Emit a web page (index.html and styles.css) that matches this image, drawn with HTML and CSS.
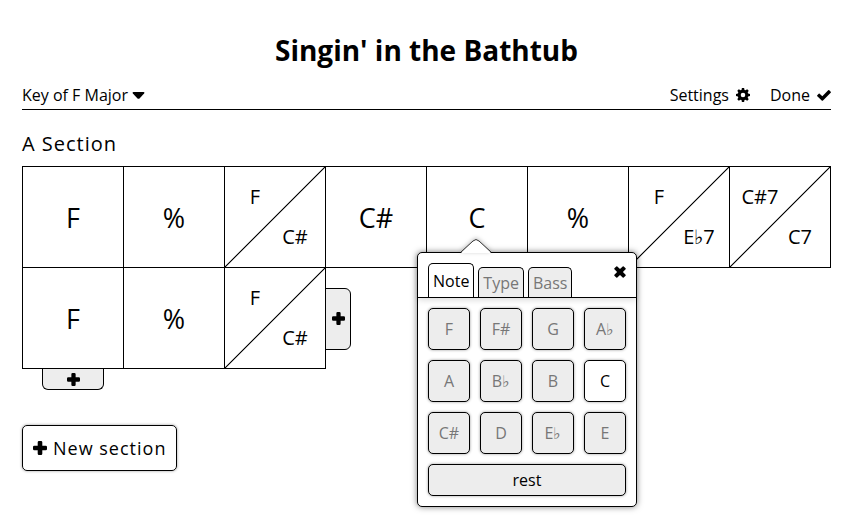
FILE: index.html
```html
<!DOCTYPE html>
<html lang="en">
<head>
<meta charset="utf-8">
<meta name="viewport" content="width=device-width, initial-scale=1">
<title>Singin' in the Bathtub</title>
<link rel="stylesheet" href="styles.css">
</head>
<body>
<svg class="sprite" aria-hidden="true">
  <symbol id="plus" viewBox="0 0 14 14"><path d="M6 0h2q1.300 0 1.300 1.300v3.400h3.400q1.300 0 1.300 1.300v2q0 1.300-1.300 1.300H9.300v3.400Q9.300 14 8 14H6q-1.300 0-1.300-1.300V9.300H1.300Q0 9.300 0 8V6q0-1.300 1.300-1.300h3.400V1.300Q4.700 0 6 0z"/></symbol>
</svg>
<main class="page">
  <h1 class="title">Singin' in the Bathtub</h1>
  <nav class="toolbar">
    <button class="tool" type="button">Key of F Major
      <svg class="caret" viewBox="0 0 12 7" aria-hidden="true"><path d="M1 0h10q1.500.3.600 1.500L7 6.400q-1 .9-2 0L.4 1.500Q-.5.300 1 0z"/></svg>
    </button>
    <div class="tools">
      <button class="tool" type="button">Settings
        <svg class="gear" viewBox="0 0 14 14" aria-hidden="true"><path fill-rule="evenodd" d="M5.900 0h2.200l.4 1.900 1 .4L11.200 1.300l1.500 1.500-1 1.700.4 1 1.900.4v2.200l-1.900.4-.4 1 1 1.700-1.500 1.500-1.700-1-1 .4-.4 1.900H5.900l-.4-1.900-1-.4-1.700 1-1.500-1.500 1-1.700-.4-1L0 8.100V5.900l1.900-.4.4-1-1-1.700 1.500-1.500 1.700 1 1-.4zM7 4.700a2.300 2.300 0 1 0 0 4.600 2.300 2.300 0 0 0 0-4.600z"/></svg>
      </button>
      <button class="tool" type="button">Done
        <svg class="check" viewBox="0 0 14 11" aria-hidden="true"><path d="M11.200.3q.6-.5 1.100 0l1.400 1.400q.5.500 0 1L6 10.500q-.7.600-1.300 0L.3 6.200q-.5-.5 0-1l1.400-1.400q.5-.5 1 0l2.600 2.500z"/></svg>
      </button>
    </div>
  </nav>

  <section>
    <h2 class="section-title">A Section</h2>
    <div class="bars">
      <div class="bar"><button class="chord" type="button">F</button></div>
      <div class="bar"><button class="chord" type="button">%</button></div>
      <div class="bar"><button class="chord split" type="button"><span>F</span><span class="second">C#</span></button></div>
      <div class="bar"><button class="chord" type="button">C#</button></div>
      <div class="bar">
        <button class="chord" type="button">C</button>
        <div class="popup" role="dialog" aria-label="Edit chord">
          <svg class="arrow" viewBox="0 0 32 15" aria-hidden="true"><path class="arrow-fill" d="M1 15 13 3q3-3 6 0l12 12z"/><path class="arrow-line" d="M1 14 13 3q3-3 6 0l12 11"/></svg>
          <div class="popup-head">
            <div class="tabs" role="tablist">
              <button class="tab active" type="button" role="tab" aria-selected="true">Note</button>
              <button class="tab" type="button" role="tab" aria-selected="false">Type</button>
              <button class="tab" type="button" role="tab" aria-selected="false">Bass</button>
            </div>
            <button class="close" type="button" aria-label="Close"><svg viewBox="0 0 12 12" aria-hidden="true"><path d="M3.300.4 6 3.100 8.700.4q.5-.4 1 0l1.900 1.900q.4.500 0 1L8.900 6l2.700 2.700q.4.500 0 1l-1.900 1.900q-.5.400-1 0L6 8.900l-2.700 2.700q-.5.400-1 0L.4 9.700q-.4-.5 0-1L3.100 6 .4 3.300q-.4-.5 0-1L2.300.4q.5-.4 1 0z"/></svg></button>
          </div>
          <div class="keys">
            <button class="key" type="button">F</button>
            <button class="key" type="button">F#</button>
            <button class="key" type="button">G</button>
            <button class="key" type="button">A♭</button>
            <button class="key" type="button">A</button>
            <button class="key" type="button">B♭</button>
            <button class="key" type="button">B</button>
            <button class="key selected" type="button">C</button>
            <button class="key" type="button">C#</button>
            <button class="key" type="button">D</button>
            <button class="key" type="button">E♭</button>
            <button class="key" type="button">E</button>
            <button class="key rest" type="button">rest</button>
          </div>
        </div>
      </div>
      <div class="bar"><button class="chord" type="button">%</button></div>
      <div class="bar"><button class="chord split" type="button"><span>F</span><span class="second">E♭7</span></button></div>
      <div class="bar"><button class="chord split" type="button"><span>C#7</span><span class="second">C7</span></button></div>
      <div class="bar"><button class="chord" type="button">F</button></div>
      <div class="bar"><button class="chord" type="button">%</button></div>
      <div class="bar"><button class="chord split" type="button"><span>F</span><span class="second">C#</span></button></div>
      <button class="add add-bar" type="button" aria-label="Add bar"><svg aria-hidden="true"><use href="#plus"/></svg></button>
    </div>
    <button class="add add-row" type="button" aria-label="Add row"><svg aria-hidden="true"><use href="#plus"/></svg></button>
  </section>

  <button class="new-section" type="button"><svg aria-hidden="true"><use href="#plus"/></svg>New section</button>
</main>
</body>
</html>
```
FILE: styles.css
```css
* {
  box-sizing: border-box;
}

body {
  margin: 0;
  background: #fff;
  color: #000;
  font: 16px/24px "Open Sans", "Noto Sans", sans-serif;
}

button {
  margin: 0;
  padding: 0;
  border: 0;
  background: none;
  color: inherit;
  font: inherit;
  letter-spacing: inherit;
  cursor: pointer;
}

svg {
  display: block;
  fill: currentColor;
}

.sprite {
  position: absolute;
  width: 0;
  height: 0;
}

.page {
  min-height: 100vh;
  padding: 30px 22px;
}

.title {
  margin: 0;
  font-size: 28px;
  line-height: 40px;
  text-align: center;
}

.toolbar {
  display: flex;
  justify-content: space-between;
  margin-top: 13px;
  padding-bottom: 2px;
  border-bottom: 1px solid #000;
}

.tools {
  display: flex;
  gap: 20px;
}

.tool {
  display: flex;
  align-items: center;
  gap: 4px;
}

.tools .tool {
  gap: 7px;
}

.caret {
  width: 13px;
  height: 7px;
}

.gear {
  width: 14px;
  height: 14px;
}

.check {
  width: 14px;
  height: 11px;
}

.section-title {
  margin: 20px 0 8px;
  font-size: 20px;
  font-weight: 400;
  line-height: 28px;
  letter-spacing: 1px;
}

.bars {
  display: grid;
  grid-template-columns: repeat(8, 1fr);
  padding: 0 1px 1px 0;
}

.bar {
  position: relative;
  aspect-ratio: 1;
  margin: 0 -1px -1px 0;
  border: 1px solid #000;
}

.chord {
  display: block;
  width: 100%;
  height: 100%;
  padding-top: 2px;
  font-size: 27px;
  line-height: 32px;
}

.split {
  display: grid;
  grid-template: 1fr 1fr / 1fr 1fr;
  place-items: center;
  padding: 10px;
  background: linear-gradient(to bottom right, transparent calc(50% - 1px), #000 50%, transparent calc(50% + 1px));
  font-size: 20px;
  white-space: nowrap;
}

.second {
  grid-area: 2 / 2;
}

.add {
  display: grid;
  place-items: center;
  border: 1px solid #000;
  background: #ededed;
}

.add svg {
  width: 13px;
  height: 13px;
}

.add-bar {
  place-self: center start;
  width: 26px;
  height: 62px;
  margin-top: 2px;
  border-radius: 0 6px 6px 0;
}

.add-row {
  width: 62px;
  height: 21px;
  margin-left: 20px;
  border-top: 0;
  border-radius: 0 0 6px 6px;
}

.new-section {
  display: flex;
  align-items: center;
  gap: 6px;
  margin-top: 35px;
  padding: 10px;
  border: 1px solid #000;
  border-radius: 5px;
  box-shadow: 0 0 3px rgba(0, 0, 0, 0.4);
  font-size: 18px;
  letter-spacing: 1px;
}

.new-section svg {
  width: 14px;
  height: 14px;
}

.popup {
  position: absolute;
  z-index: 1;
  top: 85px;
  left: -10px;
  width: 220px;
  border: 1px solid #000;
  border-radius: 5px;
  background: #fff;
  box-shadow: 0 0 6px rgba(0, 0, 0, 0.5);
}

.arrow {
  position: absolute;
  top: -15px;
  left: 42px;
  width: 32px;
  height: 15px;
  overflow: visible;
  filter: drop-shadow(0 -1px 2px rgba(0, 0, 0, 0.25));
}

.arrow-fill {
  fill: #fff;
}

.arrow-line {
  fill: none;
  stroke: #333;
}

.popup-head {
  display: flex;
  justify-content: space-between;
  padding: 10px 10px 0;
  border-bottom: 1px solid #000;
  box-shadow: 0 2px 6px rgba(0, 0, 0, 0.15);
}

.tabs {
  display: flex;
  align-items: flex-end;
  gap: 4px;
}

.tab {
  height: 30px;
  padding: 0 4px;
  border: 1px solid #000;
  border-bottom: 0;
  border-radius: 5px 5px 0 0;
  background: #ededed;
  color: #777;
}

.tab.active {
  height: 34px;
  background: #fff;
  color: #000;
}

.close {
  align-self: flex-start;
  padding: 3px 0 3px 4px;
}

.close svg {
  width: 12px;
  height: 12px;
}

.keys {
  display: grid;
  grid-template-columns: repeat(4, 1fr);
  gap: 10px;
  padding: 10px;
}

.key {
  height: 42px;
  border: 1px solid #000;
  border-radius: 5px;
  background: #ededed;
  box-shadow: 0 0 3px rgba(0, 0, 0, 0.4);
  color: #777;
}

.key.selected {
  background: #fff;
  color: #000;
}

.key.rest {
  grid-column: 1 / -1;
  height: 32px;
  color: #000;
}
```
